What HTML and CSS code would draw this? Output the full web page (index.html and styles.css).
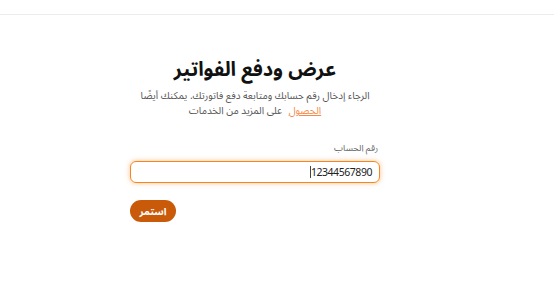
FILE: index.html
```html
<!DOCTYPE html>
<html lang="ar" dir="rtl">
<head>
<meta charset="utf-8">
<link rel="stylesheet" href="styles.css">
</head>
<body>
<header class="topbar"></header>
<main class="page">
  <section class="card">
    <h1 class="title">عرض ودفع الفواتير</h1>
    <p class="desc"><span class="line">الرجاء إدخال رقم حسابك ومتابعة دفع فاتورتك. يمكنك أيضًا</span><span class="line"><a class="link" href="#">الحصول</a> على المزيد من الخدمات</span></p>
    <form class="form">
      <label class="label" for="acc">رقم الحساب</label>
      <div class="field"><span class="value">12344567890</span><span class="caret"></span></div>
      <div class="actions"><button class="btn" type="button">استمر</button></div>
    </form>
  </section>
</main>
</body>
</html>
```
FILE: styles.css
```css
html, body { margin: 0; padding: 0; background: #fff; }
body { font-family: "Noto Sans Arabic", "Noto Sans", sans-serif; color: #111; width: 554px; height: 308px; overflow: hidden; }
.topbar { height: 14px; border-bottom: 1px solid #ececec; }
.page { display: flex; justify-content: flex-start; padding-right: 174px; }
.card { width: 250px; display: flex; flex-direction: column; }
.title { margin: 38px 0 0; font-size: 20px; font-weight: 700; text-align: center; line-height: 34px; color: #111; }
.desc { margin: 1px 0 0; font-size: 10px; color: #555; text-align: center; display: flex; flex-direction: column; }
.line { display: block; height: 15px; line-height: 15px; }
.link { color: #f58a4a; text-decoration: underline; margin-left: 4px; }
.form { margin-top: 24px; display: flex; flex-direction: column; }
.label { font-size: 9px; color: #666; line-height: 14px; margin-right: 2px; }
.field { margin-top: 5px; height: 20px; border: 1.5px solid #f7861f; border-radius: 6px; box-shadow: 0 0 4px 1px rgba(247,134,31,0.35); display: flex; align-items: center; padding: 0 7px; }
.value { font-family: "Noto Sans", sans-serif; font-size: 10.5px; letter-spacing: -0.45px; color: #222; direction: ltr; }
.caret { width: 1px; height: 12px; background: #444; margin-left: 1px; }
.actions { margin-top: 17px; display: flex; justify-content: flex-end; }
.btn { width: 46px; height: 22px; border: 0; border-radius: 11px; background: #c85a0a; color: #fff; font-family: inherit; font-size: 10px; font-weight: 700; padding: 0; }
```
